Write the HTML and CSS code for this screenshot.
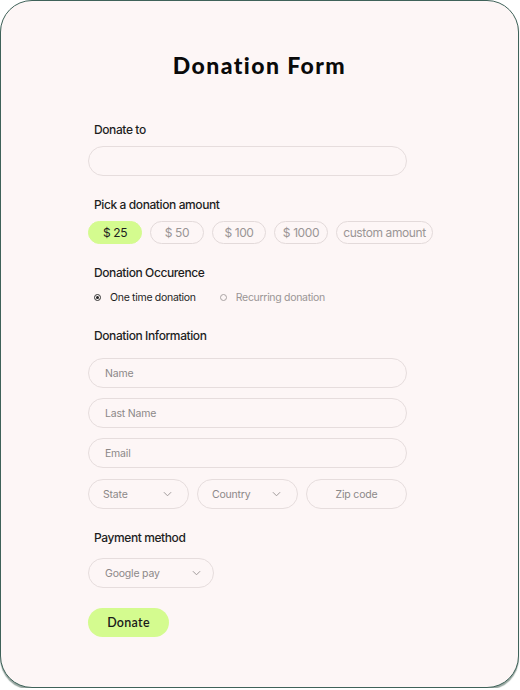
FILE: index.html
```html
<!DOCTYPE html>
<html lang="en">
<head>
<meta charset="utf-8">
<title>Donation Form</title>
<link rel="stylesheet" href="styles.css">
</head>
<body>
<div class="card">
  <h1 class="title">Donation Form</h1>
  <div class="form">
    <div class="label l-first">Donate to</div>
    <div class="field wide"></div>

    <div class="label l-sec">Pick a donation amount</div>
    <div class="pills">
      <span class="pill active">$ 25</span>
      <span class="pill">$ 50</span>
      <span class="pill">$ 100</span>
      <span class="pill">$ 1000</span>
      <span class="pill custom">custom amount</span>
    </div>

    <div class="label l-sec">Donation Occurence</div>
    <div class="radios">
      <span class="radio on"><span class="dot"></span>One time donation</span>
      <span class="radio"><span class="dot"></span>Recurring donation</span>
    </div>

    <div class="label l-info">Donation Information</div>
    <div class="stack">
      <div class="field wide">Name</div>
      <div class="field wide">Last Name</div>
      <div class="field wide">Email</div>
      <div class="row3">
        <div class="field select">State<svg class="chev" viewBox="0 0 10 6"><path d="M1 1l4 4 4-4"/></svg></div>
        <div class="field select">Country<svg class="chev" viewBox="0 0 10 6"><path d="M1 1l4 4 4-4"/></svg></div>
        <div class="field zip">Zip code</div>
      </div>
    </div>

    <div class="label l-pay">Payment method</div>
    <div class="field select pay">Google pay<svg class="chev" viewBox="0 0 10 6"><path d="M1 1l4 4 4-4"/></svg></div>

    <button class="donate">Donate</button>
  </div>
</div>
</body>
</html>
```

FILE: styles.css
```css
html, body {
  margin: 0;
  padding: 0;
  background: #ffffff;
}
body {
  font-family: Inter, "Liberation Sans", Arial, sans-serif;
  color: #1e1e1e;
}
.card {
  box-sizing: border-box;
  width: 519px;
  height: 688px;
  border: 1.5px solid #3f6259;
  border-radius: 32px;
  background: #fdf6f6;
  box-shadow: 0 2px 1px #98a7a1;
  padding-top: 49px;
}
.title {
  margin: 0;
  text-align: center;
  font-family: Lato, Inter, sans-serif;
  font-weight: 900;
  font-size: 23px;
  line-height: 30px;
  letter-spacing: 1.4px;
  color: #0a0a0a;
}
.form {
  padding-left: 87px;
  display: flex;
  flex-direction: column;
  align-items: flex-start;
}
.label {
  font-size: 12px;
  font-weight: 500;
  line-height: 16px;
  letter-spacing: -0.4px;
  padding-left: 6px;
  color: #1e1e1e;
}
.l-first { margin-top: 42px; margin-bottom: 8px; }
.l-sec { margin-top: 21px; margin-bottom: 8px; }
.l-info { margin-top: 24px; margin-bottom: 14px; }
.l-pay { margin-top: 21px; margin-bottom: 12px; }
.field {
  box-sizing: border-box;
  height: 30px;
  border: 1px solid #e6dddd;
  border-radius: 15px;
  font-size: 10.5px;
  letter-spacing: -0.2px;
  color: #8c8888;
  display: flex;
  align-items: center;
  padding-left: 16px;
}
.wide { width: 319px; }
.pills {
  display: flex;
  gap: 8px;
}
.pill {
  box-sizing: border-box;
  height: 23px;
  width: 54px;
  border: 1px solid #e3dada;
  border-radius: 12px;
  font-size: 12px;
  letter-spacing: -0.4px;
  color: #9a9595;
  display: flex;
  align-items: center;
  justify-content: center;
}
.pill.active {
  background: #d4fb8f;
  border-color: #d4fb8f;
  color: #1e1e1e;
}
.pill.custom { width: 97px; }
.radios {
  display: flex;
  gap: 24px;
  padding-left: 6px;
  margin-top: 1px;
  height: 14px;
  align-items: center;
}
.radio {
  display: flex;
  align-items: center;
  gap: 9px;
  font-size: 10.5px;
  letter-spacing: -0.3px;
  color: #9a9595;
}
.radio.on { color: #1e1e1e; }
.dot {
  box-sizing: border-box;
  width: 7px;
  height: 7px;
  border: 1px solid #a8a3a3;
  border-radius: 50%;
  position: relative;
}
.radio.on .dot {
  border-color: #333;
}
.radio.on .dot::after {
  content: "";
  position: absolute;
  left: 1px;
  top: 1px;
  width: 3px;
  height: 3px;
  border-radius: 50%;
  background: #222;
}
.stack {
  display: flex;
  flex-direction: column;
  gap: 10px;
}
.row3 {
  display: flex;
  gap: 8px;
  margin-top: 1px;
}
.select {
  width: 101px;
  justify-content: space-between;
  padding: 0 16px 0 14px;
}
.zip {
  width: 101px;
  justify-content: center;
  padding: 0;
}
.chev {
  width: 9px;
  height: 6px;
  fill: none;
  stroke: #a09a9a;
  stroke-width: 1.1;
}
.pay {
  width: 126px;
  padding-left: 16px;
  padding-right: 12px;
}
.donate {
  margin-top: 20px;
  box-sizing: border-box;
  width: 81px;
  height: 29px;
  border: none;
  border-radius: 15px;
  background: #d4fb8f;
  font-family: Lato, Inter, sans-serif;
  font-size: 12.5px;
  font-weight: 600;
  letter-spacing: 0.3px;
  color: #1a1a1a;
  padding: 0;
}
```
